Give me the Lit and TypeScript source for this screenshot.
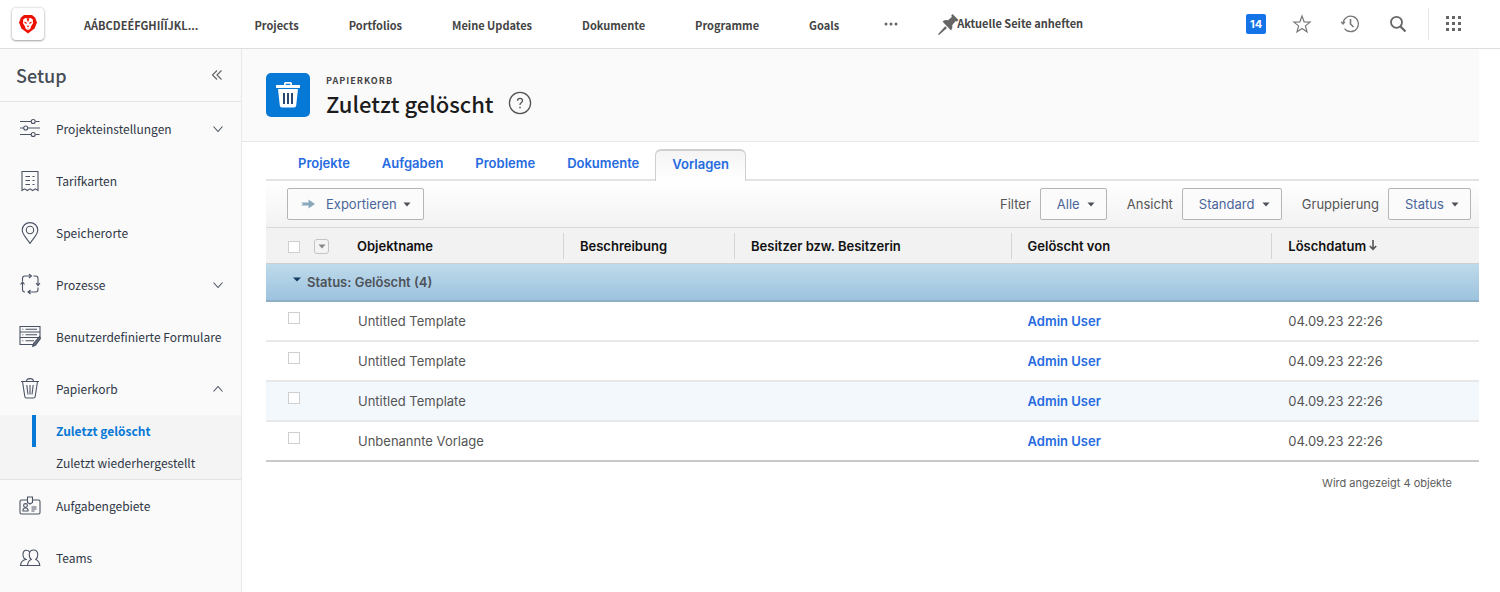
import { LitElement, html, css, svg, nothing } from "lit";
import { customElement, property, state } from "lit/decorators.js";
import { classMap } from "lit/directives/class-map.js";

const NAV = ["Projects", "Portfolios", "Meine Updates", "Dokumente", "Programme", "Goals"];
const TABS = ["Projekte", "Aufgaben", "Probleme", "Dokumente", "Vorlagen"];
const ROWS = [
  { name: "Untitled Template", by: "Admin User", date: "04.09.23 22:26" },
  { name: "Untitled Template", by: "Admin User", date: "04.09.23 22:26" },
  { name: "Untitled Template", by: "Admin User", date: "04.09.23 22:26", hover: true },
  { name: "Unbenannte Vorlage", by: "Admin User", date: "04.09.23 22:26" },
];
const FILTERS = [
  { id: "filter", label: "Filter", value: "Alle" },
  { id: "view", label: "Ansicht", value: "Standard" },
  { id: "group", label: "Gruppierung", value: "Status" },
];
const SIDE = [
  { icon: "sliders", label: "Projekteinstellungen", toggle: "down" },
  { icon: "receipt", label: "Tarifkarten" },
  { icon: "place", label: "Speicherorte" },
  { icon: "process", label: "Prozesse", toggle: "down" },
  { icon: "forms", label: "Benutzerdefinierte Formulare" },
  { icon: "bin", label: "Papierkorb", toggle: "up", sub: ["Zuletzt gelöscht", "Zuletzt wiederhergestellt"] },
  { icon: "badge", label: "Aufgabengebiete" },
  { icon: "people", label: "Teams" },
];

const ICONS: Record<string, unknown> = {
  sliders: svg`<path d="M1 3.500h11M16.500 3.500h4M1 10h3.500M9 10h12M1 16.500h11M16.500 16.500h4"/><circle cx="14.200" cy="3.500" r="2"/><circle cx="6.700" cy="10" r="2"/><circle cx="14.200" cy="16.500" r="2"/>`,
  receipt: svg`<path d="M3 20.500V1.500h16v19l-2.600-1.700-2.700 1.700-2.700-1.700-2.700 1.700-2.700-1.700z"/><path d="M6.500 6.500h4.500M13.500 6.500h2M6.500 10.500h4.500M13.500 10.500h2M6.500 14.500h4.500M13.500 14.500h2"/>`,
  place: svg`<path d="M11 21.500C9 17.500 3.200 13 3.200 8a7.800 7.400 0 0 1 15.600 0c0 5-5.800 9.500-7.800 13.500z"/><circle cx="11" cy="8" r="3.700"/>`,
  process: svg`<path d="M3.500 7V4.500Q3.500 2 6 2H11M14.500 2H16.500q2.500 0 2.500 2.500v6M19 13.500v2q0 2.500-2.500 2.500H9.500M6 18q-2.500 0-2.500-2.500V8M10 0l2.500 2L10 4M17 9l2 2.500 2-2.500M11.500 16l-2.500 2 2.500 2M1.500 10.500L3.500 8l2 2.500"/>`,
  forms: svg`<path d="M1 .500h20v5.500H1zM1 6h20v5.500H1zM15 18.500H1v-7h20M6.500 3.200h11.500M6.500 8.700h11.500M6.500 14.700h8.500M3.300 3.200h1M3.300 8.700h1M3.300 14.700h1"/><path d="M20.500 10.500l-6 7-.8 2.800 2.700-1.100 5-6.500z" fill="#6a7080"/>`,
  bin: svg`<path d="M2 3.500h18M3.500 3.500l2.300 15q.2 1.500 1.700 1.500h7q1.500 0 1.700-1.500L18.500 3.500M7.500 3.500Q7.500 .6 11 .6t3.500 2.900M7.800 7l1.200 9.500M11 7v9.500M14.200 7L13 16.500"/>`,
  badge: svg`<path d="M8 5H2.500Q1 5 1 6.500v11Q1 19 2.500 19h17q1.500 0 1.500-1.500v-11Q21 5 19.500 5H14M8.500 2h5v5.500L11 9 8.500 7.500zM4 16v-1q0-2 2.500-2t2.500 2v1zM12.500 12h5M12.500 14h5M12.500 16h3"/><circle cx="6.500" cy="10.500" r="1.900"/>`,
  people: svg`<path d="M9.500 12.800M8 12.500q-1-.3-1.500 0-4.500 1-5 6h7M7 12.300Q4 11.500 4 7.800 4 3.300 7.300 3.300q2.300 0 3 1.500M8.500 18.500q.3-4.500 3.700-6-2-1.800-2-5Q10.500 3 14.500 3t4.300 4.500q0 3.200-2 5 3.500 1.500 4 6z"/>`,
};

const caret = html`<svg class="caret" viewBox="0 0 8 5" width="8" height="5" aria-hidden="true"><path d="M0.500 0.500h7L4 4.500z" fill="#4c5158" /></svg>`;

@customElement("top-bar")
class TopBar extends LitElement {
  static styles = css`
    :host { display: block; }
    .bar { display: flex; align-items: center; height: 48px; border-bottom: 1px solid #dedede; background: #fff; font: bold 11px/16px "Noto Sans CJK SC", "Noto Sans", sans-serif; color: #444; }
    .logo { display: grid; place-items: center; width: 32px; height: 32px; margin: 0 12px; border-radius: 4px; box-shadow: 0 0 3px rgba(0, 0, 0, .2), 0 1px 2px rgba(0, 0, 0, .3); }
    .nav { display: flex; align-items: center; }
    .nav a { color: inherit; text-decoration: none; white-space: nowrap; padding: 2px 25px 0; }
    .nav a.home { padding: 2px 31px 0 28px; }
    button { border: 0; background: none; padding: 0; margin: 0; color: inherit; font: inherit; display: flex; align-items: center; cursor: pointer; white-space: nowrap; }
    .nav .more { padding: 0 20px; }
    .nav .pin { padding: 0 0 2px 19px; }
    .pin svg { margin-right: -2px; }
    .tools { display: flex; align-items: center; gap: 28px; margin-left: auto; padding-right: 38px; }
    .tools .count { background: #1473e6; color: #fff; width: 20px; height: 20px; margin-right: -2px; border-radius: 2px; justify-content: center; font: bold 11px/20px Inter, sans-serif; }
    .tools .apps { border-left: 1px solid #e6e6e6; height: 32px; padding-left: 17px; margin-left: -8px; }
  `;
  render() {
    return html`<header class="bar">
      <a class="logo" href="#" aria-label="Startseite"><svg width="20" height="20" viewBox="0 0 20 20">
        <path d="M6 1h8l3 2.500 2 5-2.500 6L10 19.500l-6.500-5L1 8.500l2-5z" fill="#eb1000" />
        <path d="M5.300 5.300L7.500 4h5l2.200 1.300.3 4-2 3.200-.8 2.500-2.200 1.200-2.200-1.200-.8-2.500-2-3.200z" fill="#fff" />
        <path d="M6.300 7.500l2.500 1.200-.3 1.300-2-1zM13.700 7.500l-2.500 1.200.3 1.300 2-1zM8.500 11.800h3L10 13.300zM8.500 4.300h3L10 8.500zM8.300 14.300l1.700.6 1.700-.6-1.700 1.300z" fill="#eb1000" />
      </svg></a>
      <nav class="nav">
        <a class="home" href="#">AÁBCDEÉFGHIÍĨJKL...</a>
        ${NAV.map((n) => html`<a href="#">${n}</a>`)}
        <button class="more" aria-label="Mehr"><svg width="14" height="4" viewBox="0 0 14 4" fill="#666"><circle cx="2" cy="2" r="1.500" /><circle cx="7" cy="2" r="1.500" /><circle cx="12" cy="2" r="1.500" /></svg></button>
        <button class="pin"><svg width="22" height="24" viewBox="0 0 22 24" fill="#666"><path d="M15.500 3l6 6-1.500 1.500-1.500-.2-3.200 3.700q.6 3-1.300 5.500L5.500 10.500Q8 8.500 11 9.200l3.800-3.300-.5-1.600z" /><path d="M8.200 15.200l1.800 1.800-8 7-1-.8z" /></svg><span>Aktuelle Seite anheften</span></button>
      </nav>
      <div class="tools">
        <button class="count" aria-label="14 Benachrichtigungen">14</button>
        <button aria-label="Favoriten"><svg width="20" height="20" viewBox="0 0 20 20" fill="none" stroke="#777" stroke-width="1.200"><path d="M10 2l2.100 5.800 6 .3-4.700 3.800 1.600 5.900L10 14.400l-5 3.400 1.600-5.900L1.900 8.100l6-.3z" /></svg></button>
        <button aria-label="Verlauf"><svg width="20" height="20" viewBox="0 0 20 20" fill="none" stroke="#777" stroke-width="1.200"><path d="M3 9.500A7.700 7.700 0 1 1 4.500 14.500M5 15.300a7.700 7.700 0 0 0 5.500 2.400" /><path d="M1 7.800l2 2.200 2-2.200" /><path d="M10.500 5v5l3 3" stroke-width="1.600" /></svg></button>
        <button aria-label="Suchen"><svg width="20" height="20" viewBox="0 0 20 20" fill="none" stroke="#666"><circle cx="8.500" cy="8.300" r="5.500" stroke-width="1.800" /><path d="M12.500 12.500l5 5" stroke-width="2.200" /></svg></button>
        <button class="apps" aria-label="Apps"><svg width="16" height="16" viewBox="0 0 16 16" fill="#666"><path d="M0 0h3v3H0zM6 0h3v3H6zM12 0h3v3h-3zM0 6h3v3H0zM6 6h3v3H6zM12 6h3v3h-3zM0 12h3v3H0zM6 12h3v3H6zM12 12h3v3h-3z" /></svg></button>
      </div>
    </header>`;
  }
}

@customElement("setup-menu")
class SetupMenu extends LitElement {
  static styles = css`
    :host { display: block; background: #fafafa; border-right: 1px solid #e9e9e9; font: 12px/20px "Noto Sans CJK SC", "Noto Sans", sans-serif; color: #2f3747; }
    .head { display: flex; align-items: center; justify-content: space-between; height: 52px; padding: 0 18px 0 16px; border-bottom: 1px solid #e6e6e6; }
    h2 { margin: 0; font-size: 18px; line-height: 24px; font-weight: 500; color: #464d56; }
    button { border: 0; background: none; padding: 0; display: flex; cursor: pointer; }
    ul { list-style: none; margin: 0; padding: 0; }
    .row { display: flex; align-items: center; height: 52px; padding: 0 17px 0 19px; }
    .row a { display: flex; align-items: center; gap: 15px; flex: 1; white-space: nowrap; }
    a { color: inherit; text-decoration: none; }
    .icon, .chev { fill: none; stroke: #4a5263; stroke-width: 1.1; flex: none; }
    .sub { background: #f4f4f4; border-bottom: 1px solid #e3e3e3; }
    .sub a { display: block; line-height: 32px; margin-left: 32px; padding-left: 20px; border-left: 4px solid transparent; }
    .sub .current { color: #0678d6; font-weight: bold; border-color: #0678d6; }
    .items { padding-top: 1px; }
  `;
  render() {
    return html`<nav aria-label="Setup">
      <div class="head"><h2>Setup</h2><button aria-label="Menü einklappen"><svg width="12" height="12" viewBox="0 0 12 12" fill="none" stroke="#666" stroke-width="1.200"><path d="M6 1.500L1.500 6 6 10.500M10.500 1.500L6 6l4.500 4.500" /></svg></button></div>
      <ul class="items">${SIDE.map((s) => html`<li>
        <div class="row">
          <a href="#"><svg class="icon" width="22" height="22" viewBox="0 0 22 22" aria-hidden="true">${ICONS[s.icon]}</svg><span>${s.label}</span></a>
          ${s.toggle ? html`<button aria-label=${s.label} aria-expanded=${s.toggle === "up"}><svg class="chev" width="12" height="8" viewBox="0 0 12 8"><path d=${s.toggle === "up" ? "M1.500 6.500L6 1.500l4.500 5" : "M1.500 1.500L6 6.500l4.500-5"} /></svg></button>` : nothing}
        </div>
        ${s.sub ? html`<ul class="sub">${s.sub.map((t, i) => html`<li><a href="#" class=${classMap({ current: i === 0 })}>${t}</a></li>`)}</ul>` : nothing}
      </li>`)}</ul>
    </nav>`;
  }
}

@customElement("deleted-list")
class DeletedList extends LitElement {
  @state() private tab = "Vorlagen";
  static styles = css`
    :host { display: block; padding: 0 0 24px 24px; font: 13px/20px Inter, "Open Sans", sans-serif; color: #555; }
    .tabs { display: flex; align-items: flex-end; height: 37px; padding: 0 16px; border-bottom: 2px solid #e2e2e2; }
    .tabs button { height: 32px; padding: 0 16px; border: 0; background: none; color: #266bdf; font: 600 13px/20px Inter, sans-serif; cursor: pointer; }
    .tabs .on { box-sizing: border-box; padding-bottom: 4px; border: 1px solid #cfcfcf; border-top-width: 2px; border-bottom: 0; border-radius: 6px 6px 0 0; background: linear-gradient(#f4f4f4, #fff); margin-bottom: -2px; }
    .toolbar { display: flex; align-items: center; justify-content: space-between; height: 46px; padding: 0 8px 0 21px; background: linear-gradient(#fff, #f2f2f2); border-bottom: 1px solid #d9d9d9; }
    .export, select { height: 32px; box-sizing: border-box; border: 1px solid #b5b5b5; border-radius: 2px; background: #fbfbfb; color: #4a659b; font: 13px/20px Inter, sans-serif; cursor: pointer; }
    .export { display: flex; align-items: center; padding: 0 12px; }
    .export .arrow { margin-right: 10px; }
    .export .caret { margin-left: 6px; }
    .filters { display: flex; gap: 20px; }
    .filter { display: flex; align-items: center; gap: 9px; }
    .pick { display: grid; align-items: center; }
    .pick > * { grid-area: 1 / 1; }
    select { appearance: none; padding: 0 26px 0 16px; }
    .pick .caret { justify-self: end; margin-right: 12px; pointer-events: none; }
    table { width: 100%; border-collapse: separate; border-spacing: 0; table-layout: fixed; }
    .c0 { width: 75px; }
    .c1 { width: 18.3%; }
    .c2 { width: 14.1%; }
    .c3 { width: 22.8%; }
    .c4 { width: 21.5%; }
    th, td { text-align: left; padding: 0 16px; height: 38px; border-bottom: 2px solid #e8e8e8; }
    thead th { height: 35px; background: #f2f2f2; color: #111; font-weight: 600; padding: 0; border-bottom: 1px solid #cfcfcf; }
    thead span { display: block; padding: 3px 16px; border-left: 1px solid #d5d5d5; }
    thead .plain { border: 0; }
    .picks { display: flex; align-items: center; gap: 14px; padding: 2px 0 0 22px; }
    input { appearance: none; display: block; box-sizing: border-box; width: 12px; height: 12px; margin: 0; border: 1px solid #cfcfcf; background: #fff; }
    .all { display: grid; place-items: center; width: 15px; height: 15px; box-sizing: border-box; padding: 0; border: 1px solid #c4c4c4; border-radius: 3px; background: #f4f4f4; }
    .group th { height: 36px; background: linear-gradient(#bfdaeb, #9cc3de); border-bottom: 2px solid #8eaec6; font-weight: 600; color: #4d5259; padding: 0 27px; }
    .group button { display: flex; align-items: center; gap: 6px; border: 0; padding: 0; background: none; color: inherit; font: inherit; }
    .group svg { margin-bottom: 5px; }
    td { padding: 0 17px; }
    td.tick { padding: 0 22px 6px; height: 32px; }
    .hover td { background: #f3f8fd; }
    .body tr:last-child td { border-color: #c9c9c9; }
    .user { color: #266bdf; font-weight: 600; text-decoration: none; }
    .total { margin: 0; padding: 11px 27px 0; text-align: right; font-size: 11px; line-height: 20px; color: #5c5c5c; }
  `;
  render() {
    return html`
      <div class="tabs" role="tablist">${TABS.map((t) => html`<button role="tab" aria-selected=${t === this.tab} class=${classMap({ on: t === this.tab })} @click=${() => (this.tab = t)}>${t}</button>`)}</div>
      <div class="toolbar">
        <button class="export"><svg class="arrow" width="16" height="12" viewBox="0 0 16 12"><path d="M1 4.500h7.500V1.500L15 6l-6.500 4.500v-3H1L3 6z" fill="#8ba9bd" /></svg><span>Exportieren</span>${caret}</button>
        <div class="filters">${FILTERS.map((f) => html`<div class="filter"><label for=${f.id}>${f.label}</label><span class="pick"><select id=${f.id}><option>${f.value}</option></select>${caret}</span></div>`)}</div>
      </div>
      <table>
        <colgroup><col class="c0" /><col class="c1" /><col class="c2" /><col class="c3" /><col class="c4" /><col /></colgroup>
        <thead><tr>
          <th><div class="picks"><input type="checkbox" aria-label="Alle auswählen" /><button class="all" aria-label="Auswahloptionen"><svg width="8" height="5" viewBox="0 0 8 5"><path d="M0.500 0.500h7L4 4.500z" fill="#888" /></svg></button></div></th>
          <th><span class="plain">Objektname</span></th><th><span>Beschreibung</span></th><th><span>Besitzer bzw. Besitzerin</span></th><th><span>Gelöscht von</span></th>
          <th><span>Löschdatum <svg width="8" height="11" viewBox="0 0 8 11" fill="none" stroke="#555" stroke-width="1.600"><path d="M4 0v9.500M0.800 6L4 9.300 7.200 6" /></svg></span></th>
        </tr></thead>
        <tbody><tr class="group"><th colspan="6"><button aria-expanded="true"><svg width="8" height="5" viewBox="0 0 8 5"><path d="M0 0.500h8L4 4.500z" fill="#143a63" /></svg>Status: Gelöscht (4)</button></th></tr></tbody>
        <tbody class="body">${ROWS.map((r) => html`<tr class=${classMap({ hover: !!r.hover })}>
          <td class="tick"><input type="checkbox" aria-label=${r.name} /></td><td>${r.name}</td><td></td><td></td><td><a class="user" href="#">${r.by}</a></td><td>${r.date}</td>
        </tr>`)}</tbody>
      </table>
      <p class="total">Wird angezeigt 4 objekte</p>`;
  }
}

@customElement("app-root")
class AppRoot extends LitElement {
  @property() heading = "Zuletzt gelöscht";
  static styles = css`
    :host { display: flex; flex-direction: column; height: 100vh; overflow: hidden; background: #fff; }
    .page { display: flex; flex: 1; min-height: 0; }
    setup-menu { width: 241px; flex: none; }
    main { flex: 1; min-width: 0; padding-right: 21px; }
    .title { display: flex; align-items: flex-start; gap: 16px; padding: 24px; background: #fafafa; border-bottom: 1px solid #e8e8e8; font-family: "Noto Sans CJK SC", "Noto Sans", sans-serif; }
    .tile { display: grid; place-items: center; width: 44px; height: 44px; border-radius: 5px; background: #0678d6; }
    .kicker { margin: 0; font-size: 9px; line-height: 16px; font-weight: bold; letter-spacing: 1px; color: #444; }
    .line { display: flex; align-items: center; gap: 14px; }
    h1 { margin: 0; font-size: 22px; line-height: 28px; font-weight: 500; color: #1c1c1c; }
    .help { width: 24px; height: 24px; padding: 0; border: 0; background: none; }
    .help svg { display: block; }
  `;
  render() {
    return html`<top-bar></top-bar>
      <div class="page">
        <setup-menu></setup-menu>
        <main>
          <header class="title">
            <div class="tile"><svg width="26" height="28" viewBox="0 0 26 28"><path d="M9 4V2.500Q9 1 10.500 1h5Q17 1 17 2.500V4h7.500q.5 0 .5.500V7H1V4.500Q1 4 1.500 4zM10.700 4h4.600V2.700h-4.600zM3 8h20l-1.800 16.500Q21 26.500 19 26.500H7q-2 0-2.200-2z" fill="#fff" fill-rule="evenodd" /><path d="M9 12v11M13 12v11M17 12v11" stroke="#12365c" stroke-width="1.800" /></svg></div>
            <div>
              <p class="kicker">PAPIERKORB</p>
              <div class="line"><h1>${this.heading}</h1><button class="help" aria-label="Hilfe"><svg width="24" height="24" viewBox="0 0 24 24" fill="none" stroke="#555" stroke-width="1.300"><circle cx="12" cy="12" r="10.600" /><path d="M9.500 9.800Q9.500 7.300 12 7.300t2.500 2.200q0 1.300-1.300 2.300T12 14" /><path d="M12 15.700v1.500" stroke-width="1.500" /></svg></button></div>
            </div>
          </header>
          <deleted-list></deleted-list>
        </main>
      </div>`;
  }
}
